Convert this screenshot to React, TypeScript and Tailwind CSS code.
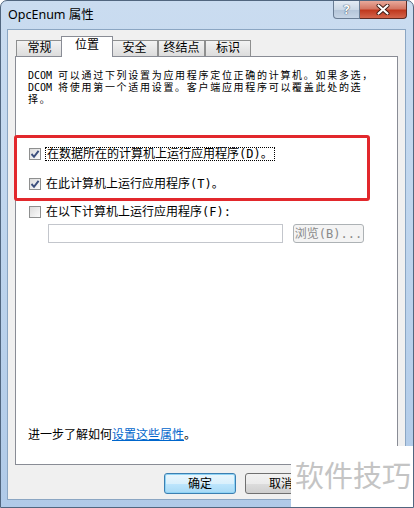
import React from "react";

const cjk = { fontFamily: '"DejaVu Sans Mono", "Noto Sans CJK SC", monospace' };
const ui = { fontFamily: '"Noto Sans", "Noto Sans CJK SC", sans-serif' };

function Check({ checked }: { checked: boolean }) {
  return (
    <span className="w-[12px] h-[12px] shrink-0 border border-[#8e8f8f] bg-[linear-gradient(135deg,#dcdcdc,#fbfbfb)] flex items-center justify-center">
      {checked && (
        <svg width="10" height="10" viewBox="0 0 10 10">
          <path d="M1.5 5 L4 7.8 L8.6 1.8" fill="none" stroke="#3c4f7d" strokeWidth="1.9" />
        </svg>
      )}
    </span>
  );
}

function Tab({ label, w, active }: { label: string; w: string; active?: boolean }) {
  if (active) {
    return (
      <div className={`${w} h-[21px] -mx-[2px] mb-[-1px] z-10 bg-white border border-b-0 border-[#898c95] flex justify-center pt-[1px] text-[12px] leading-[14px]`}>
        {label}
      </div>
    );
  }
  return (
    <div className={`${w} h-[16px] border border-b-0 border-[#8e8f8f] bg-[linear-gradient(180deg,#f3f3f3,#dcdcdc)] flex justify-center items-end text-[12px] leading-[15px]`}>
      {label}
    </div>
  );
}

function Btn({ label, primary }: { label?: string; primary?: boolean }) {
  return (
    <div
      className={
        primary
          ? "w-[72px] h-[21px] rounded-[3px] border border-[#3c7fb1] bg-[linear-gradient(180deg,#eaf6fd_0%,#d9f0fc_50%,#bee6fd_51%,#a7d9f5_100%)] shadow-[inset_0_0_0_1px_#8fd3f5] flex items-center justify-center text-[12px]"
          : "w-[72px] h-[21px] rounded-[3px] border border-[#707070] bg-[linear-gradient(180deg,#f2f2f2_0%,#ebebeb_50%,#dddddd_51%,#cfcfcf_100%)] flex items-center justify-center text-[12px]"
      }
    >
      {label}
    </div>
  );
}

export default function App() {
  return (
    <div
      className="w-[414px] h-[508px] relative overflow-hidden rounded-t-[7px] border border-[#51667f] bg-[linear-gradient(180deg,#cadcf0_0%,#c0d6ee_40%,#b0cae8_100%)] flex flex-col text-black"
      style={ui}
    >
      {/* Title bar */}
      <div className="h-[28px] shrink-0 flex items-start pl-[7px] relative">
        <span className="mt-[6px] text-[12.5px] leading-[16px]">OpcEnum 属性</span>
        <div className="ml-auto mr-[6px] flex">
          <div className="w-[27px] h-[18px] border border-t-0 border-[#6a7d94] rounded-bl-[4px] bg-[linear-gradient(180deg,#e3ebf4_0%,#cbd8e6_50%,#b3c4d8_51%,#c6d5e6_100%)] flex items-center justify-center">
            <span className="text-white text-[13px] font-bold leading-none [text-shadow:0_0_1px_#33445a,0_0_1px_#33445a]">?</span>
          </div>
          <div className="w-[47px] h-[18px] border border-t-0 border-l-0 border-[#5e2a22] rounded-br-[4px] bg-[linear-gradient(180deg,#e9a99b_0%,#d47764_45%,#c0391f_55%,#d3654c_100%)] flex items-center justify-center">
            <svg width="14" height="11" viewBox="0 0 14 11">
              <path d="M2.5 1.5 L11.5 9.5 M11.5 1.5 L2.5 9.5" stroke="#3d1a14" strokeWidth="4" strokeLinecap="round" />
              <path d="M2.5 1.5 L11.5 9.5 M11.5 1.5 L2.5 9.5" stroke="#ffffff" strokeWidth="2.2" strokeLinecap="round" />
            </svg>
          </div>
        </div>
      </div>

      {/* Client area */}
      <div className="flex-1 ml-[6px] mr-[7px] mb-[7px] bg-[#f0f0f0] border border-[#8ba6c3] flex flex-col pt-[6px] pl-[7px] pr-[7px] pb-[5px]">
        {/* Tabs */}
        <div className="h-[20px] flex items-end pl-[1px]" style={cjk}>
          <Tab label="常规" w="w-[47px]" />
          <Tab label="位置" w="w-[52px]" active />
          <Tab label="安全" w="w-[47px]" />
          <Tab label="终结点" w="w-[47px]" />
          <Tab label="标识" w="w-[46px]" />
        </div>

        {/* Panel */}
        <div className="flex-1 bg-white border border-[#898c95] relative flex flex-col pt-[13px] pb-[22px]" style={cjk}>
          <div className="pl-[12px] text-[10px] tracking-[1.7px] leading-[12px] whitespace-nowrap">
            <div>
              <span className="tracking-normal">DCOM </span>可以通过下列设置为应用程序定位正确的计算机。如果多选，
            </div>
            <div>
              <span className="tracking-normal">DCOM </span>将使用第一个适用设置。客户端应用程序可以覆盖此处的选
            </div>
            <div>择。</div>
          </div>

          <div className="mt-[41px] pl-[13px] h-[14px] flex items-center gap-[4px] text-[12px]">
            <Check checked />
            <span className="border border-dotted border-black leading-[12px] px-px">在数据所在的计算机上运行应用程序(D)。</span>
          </div>
          <div className="mt-[16px] pl-[13px] h-[14px] flex items-center gap-[5px] text-[12px]">
            <Check checked />
            <span className="leading-[12px]">在此计算机上运行应用程序(T)。</span>
          </div>
          <div className="mt-[14px] pl-[13px] h-[14px] flex items-center gap-[5px] text-[12px]">
            <Check checked={false} />
            <span className="leading-[12px]">在以下计算机上运行应用程序(F):</span>
          </div>
          <div className="mt-[5px] pl-[32px] flex items-center gap-[10px]">
            <div className="w-[235px] h-[19px] border border-[#c3c6cc] bg-white" />
            <div className="w-[71px] h-[19px] rounded-[3px] border border-[#adb2b5] bg-[#f4f4f4] flex items-center justify-center text-[12px] text-[#8a8a8a]">
              浏览(B)...
            </div>
          </div>

          <div className="mt-auto pl-[12px] text-[12px] leading-[14px]">
            进一步了解如何<span className="text-[#0066cc] underline">设置这些属性</span>。
          </div>

          {/* red annotation frame */}
          <div className="absolute left-[-2px] top-[78px] w-[356px] h-[66px] border-[3px] border-[#e2282c] rounded-[3px] pointer-events-none" />
        </div>

        {/* Buttons */}
        <div className="mt-[8px] flex justify-end gap-[9px]" style={cjk}>
          <Btn label="确定" primary />
          <Btn label="取消" />
          <Btn />
        </div>
      </div>

      {/* watermark */}
      <div className="absolute left-[290px] top-[445px] w-[124px] h-[63px] bg-white flex items-center justify-center">
        <span className="text-[29px] leading-none text-[#c4c4c4] -mt-[6px]" style={{ fontFamily: '"Noto Sans CJK SC", sans-serif' }}>
          软件技巧
        </span>
      </div>
    </div>
  );
}
